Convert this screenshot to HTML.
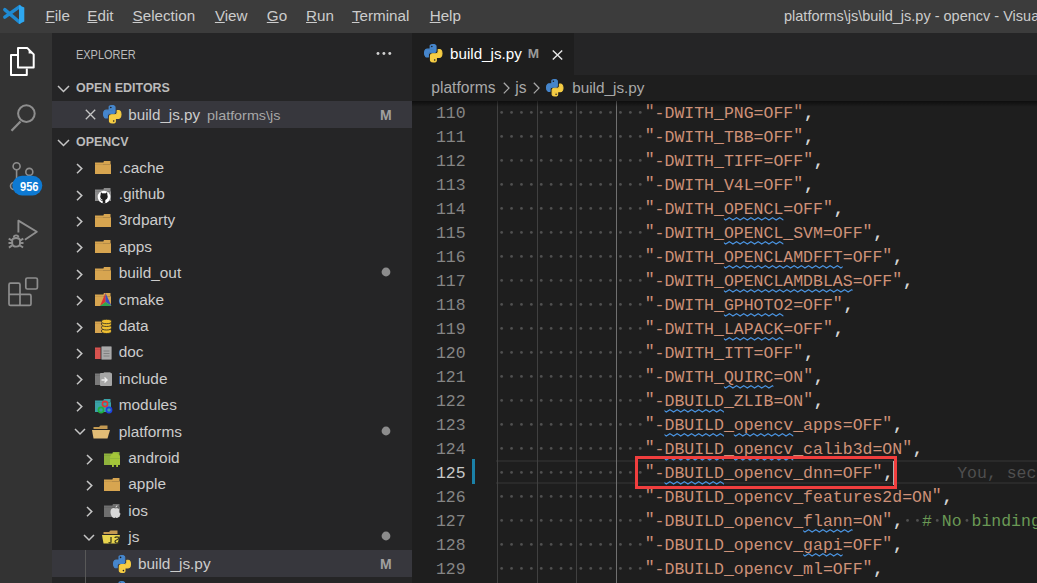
<!DOCTYPE html>
<html><head><meta charset="utf-8"><style>
html,body{margin:0;padding:0;width:1037px;height:583px;overflow:hidden;background:#1e1e1e;position:relative}
</style></head><body>
<div style="position:absolute;left:0px;top:0px;width:1037px;height:33px;background:#3c3c3c;"></div>
<div style="position:absolute;left:0px;top:33px;width:52px;height:550px;background:#333333;"></div>
<div style="position:absolute;left:52px;top:33px;width:360px;height:550px;background:#252526;"></div>
<div style="position:absolute;left:412px;top:33px;width:625px;height:42px;background:#252526;"></div>
<div style="position:absolute;left:412px;top:33px;width:162px;height:42px;background:#1e1e1e;"></div>
<div style="position:absolute;left:412px;top:75px;width:625px;height:508px;background:#1e1e1e;"></div>
<svg style="position:absolute;left:0px;top:0px;overflow:visible" width="30" height="30" viewBox="0 0 30 30">
<path d="M4.8 9.6 L19.6 22.2 M4.8 17.2 L19.6 6.6" stroke="#1f8ad2" stroke-width="3.4" stroke-linecap="round"/>
<path d="M19 5.2 L24.3 7.6 L24.3 21.6 L19 24 Z" fill="#2ea7f0"/></svg>
<div style="position:absolute;left:45.40px;top:15.53px;line-height:0;white-space:pre;font-family:'Liberation Sans', sans-serif;font-size:15.2px;color:#cccccc;font-weight:400;"><span style="text-decoration:underline;text-underline-offset:1px">F</span>ile</div>
<div style="position:absolute;left:87.30px;top:15.53px;line-height:0;white-space:pre;font-family:'Liberation Sans', sans-serif;font-size:15.2px;color:#cccccc;font-weight:400;"><span style="text-decoration:underline;text-underline-offset:1px">E</span>dit</div>
<div style="position:absolute;left:132.60px;top:15.53px;line-height:0;white-space:pre;font-family:'Liberation Sans', sans-serif;font-size:15.2px;color:#cccccc;font-weight:400;"><span style="text-decoration:underline;text-underline-offset:1px">S</span>election</div>
<div style="position:absolute;left:214.90px;top:15.53px;line-height:0;white-space:pre;font-family:'Liberation Sans', sans-serif;font-size:15.2px;color:#cccccc;font-weight:400;"><span style="text-decoration:underline;text-underline-offset:1px">V</span>iew</div>
<div style="position:absolute;left:266.80px;top:15.53px;line-height:0;white-space:pre;font-family:'Liberation Sans', sans-serif;font-size:15.2px;color:#cccccc;font-weight:400;"><span style="text-decoration:underline;text-underline-offset:1px">G</span>o</div>
<div style="position:absolute;left:306.00px;top:15.53px;line-height:0;white-space:pre;font-family:'Liberation Sans', sans-serif;font-size:15.2px;color:#cccccc;font-weight:400;"><span style="text-decoration:underline;text-underline-offset:1px">R</span>un</div>
<div style="position:absolute;left:351.90px;top:15.53px;line-height:0;white-space:pre;font-family:'Liberation Sans', sans-serif;font-size:15.2px;color:#cccccc;font-weight:400;"><span style="text-decoration:underline;text-underline-offset:1px">T</span>erminal</div>
<div style="position:absolute;left:429.70px;top:15.53px;line-height:0;white-space:pre;font-family:'Liberation Sans', sans-serif;font-size:15.2px;color:#cccccc;font-weight:400;"><span style="text-decoration:underline;text-underline-offset:1px">H</span>elp</div>
<div style="position:absolute;left:784.00px;top:15.78px;line-height:0;white-space:pre;font-family:'Liberation Sans', sans-serif;font-size:14.5px;color:#cccccc;font-weight:400;">platforms\js\build_js.py - opencv - Visual Studio Code</div>
<svg style="position:absolute;left:0px;top:0px;overflow:visible" width="52" height="320" viewBox="0 0 52 320">
<g fill="none" stroke="#ffffff" stroke-width="2" stroke-linejoin="round">
 <path d="M17 54.9 H11 V74.9 H26.8 V68.6"/>
 <path d="M18 48.1 H27.4 L33.7 54.4 V67.6 H18 Z"/>
</g>
<path d="M28.6 49.2 V53.4 H32.8 Z" fill="#ffffff"/>
<g fill="none" stroke="#8e8e8e" stroke-width="2">
 <circle cx="26.4" cy="113.6" r="8.3"/>
 <path d="M20.5 121.5 L11.5 130.8" stroke-width="2.3"/>
</g>
<g fill="none" stroke="#8e8e8e" stroke-width="1.6">
 <circle cx="16.6" cy="166.3" r="3.5"/>
 <circle cx="29.3" cy="171.9" r="3.5"/>
 <circle cx="14" cy="186" r="3.5"/>
 <path d="M16.6 169.8 V182.5"/>
 <path d="M29.3 175.4 C29.3 180 20 180 16.6 182.5"/>
</g>
<rect x="12.3" y="175.8" width="30" height="19.6" rx="9.8" fill="#0e7ad3"/>
<g fill="none" stroke="#8e8e8e" stroke-width="1.9" stroke-linejoin="round">
 <path d="M18.4 232.6 V220.6 L36.8 231.8 L24.9 239.8"/>
 <path d="M12.2 240.6 C12.2 237.2 20 237.2 20 240.6 V243.6 C20 247.6 12.2 247.6 12.2 243.6 Z"/>
 <path d="M13.8 237.6 C13.8 234.6 18.4 234.6 18.4 237.6"/>
 <path d="M8.7 238.6 L12.2 240.6 M8.5 243 H12.2 M8.9 247.6 L12.2 245.4 M23.3 238.6 L20 240.6 M23.5 243 H20 M23.1 247.6 L20 245.4"/>
</g>
<g fill="none" stroke="#8e8e8e" stroke-width="1.7">
 <path d="M20 294.4 V284.7 Q20 283.2 18.5 283.2 H10.5 Q9 283.2 9 284.7 V303.9 Q9 305.4 10.5 305.4 H29.5 Q31 305.4 31 303.9 V295.9 Q31 294.4 29.5 294.4 Z M9 294.4 H20 V305.4"/>
 <rect x="25.8" y="278" width="11.6" height="11" rx="1.6"/>
</g>
</svg>
<div style="position:absolute;left:19.50px;top:186.77px;line-height:0;white-space:pre;font-family:'Liberation Sans', sans-serif;font-size:12.2px;color:#ffffff;font-weight:700;transform:scaleX(0.91);transform-origin:0 0;">956</div>
<div style="position:absolute;left:75.70px;top:54.73px;line-height:0;white-space:pre;font-family:'Liberation Sans', sans-serif;font-size:12.6px;color:#bbbbbb;font-weight:400;transform:scaleX(0.87);transform-origin:0 0;">EXPLORER</div>
<svg style="position:absolute;left:374px;top:50px;overflow:visible" width="20" height="8" viewBox="0 0 20 8"><circle cx="4" cy="3.5" r="1.45" fill="#d0d0d0"/><circle cx="9.9" cy="3.5" r="1.45" fill="#d0d0d0"/><circle cx="15.8" cy="3.5" r="1.45" fill="#d0d0d0"/></svg>
<svg style="position:absolute;left:57px;top:85px;overflow:visible" width="14" height="8" viewBox="0 0 14 8"><path d="M1 1 L6.5 6.5 L12 1" fill="none" stroke="#c5c5c5" stroke-width="1.5"/></svg>
<div style="position:absolute;left:75.70px;top:88.06px;line-height:0;white-space:pre;font-family:'Liberation Sans', sans-serif;font-size:13.4px;color:#bbbbbb;font-weight:700;transform:scaleX(0.93);transform-origin:0 0;">OPEN EDITORS</div>
<div style="position:absolute;left:52px;top:101px;width:360px;height:27px;background:#37373d;"></div>
<svg style="position:absolute;left:85px;top:109px;overflow:visible" width="11" height="11" viewBox="0 0 11 11"><path d="M0.8 0.8 L10.2 10.2 M10.2 0.8 L0.8 10.2" stroke="#c5c5c5" stroke-width="1.3"/></svg>
<svg style="position:absolute;left:102.7px;top:104.6px;overflow:visible" width="18.5" height="18.5" viewBox="0 0 18 18">
<path d="M8.9,0.5 C5.8,0.5 6,1.9 6,1.9 V4.3 H9.1 V5 H3.1 C3.1,5 0.5,4.7 0.5,8.8 C0.5,12.9 2.8,12.7 2.8,12.7 H4.2 V10.8 C4.2,10.8 4.1,8.5 6.4,8.5 H9.5 C9.5,8.5 11.7,8.5 11.7,6.4 V2.7 C11.7,2.7 12,0.5 8.9,0.5 Z" fill="#4686cc" stroke="#4686cc" stroke-width="1.1" stroke-linejoin="round"/>
<circle cx="7.6" cy="2.4" r="0.8" fill="#1e1e1e"/>
<path d="M9.1,17.5 C12.2,17.5 12,16.1 12,16.1 V13.7 H8.9 V13 H14.9 C14.9,13 17.5,13.3 17.5,9.2 C17.5,5.1 15.2,5.3 15.2,5.3 H13.8 V7.2 C13.8,7.2 13.9,9.5 11.6,9.5 H8.5 C8.5,9.5 6.3,9.5 6.3,11.6 V15.3 C6.3,15.3 6,17.5 9.1,17.5 Z" fill="#f6cd44" stroke="#f6cd44" stroke-width="1.1" stroke-linejoin="round"/>
<circle cx="10.4" cy="15.6" r="0.8" fill="#1e1e1e"/></svg>
<div style="position:absolute;left:128.30px;top:114.53px;line-height:0;white-space:pre;font-family:'Liberation Sans', sans-serif;font-size:15.2px;color:#cccccc;font-weight:400;">build_js.py</div>
<div style="position:absolute;left:207.30px;top:115.52px;line-height:0;white-space:pre;font-family:'Liberation Sans', sans-serif;font-size:13.5px;color:#a8a8a8;font-weight:400;transform:scaleX(1.063);transform-origin:0 0;">platforms\js</div>
<div style="position:absolute;left:380.00px;top:114.95px;line-height:0;white-space:pre;font-family:'Liberation Sans', sans-serif;font-size:14px;color:#a0a0a0;font-weight:700;">M</div>
<svg style="position:absolute;left:57px;top:139px;overflow:visible" width="14" height="8" viewBox="0 0 14 8"><path d="M1 1 L6.5 6.5 L12 1" fill="none" stroke="#c5c5c5" stroke-width="1.5"/></svg>
<div style="position:absolute;left:75.70px;top:142.16px;line-height:0;white-space:pre;font-family:'Liberation Sans', sans-serif;font-size:13.4px;color:#bbbbbb;font-weight:700;transform:scaleX(0.93);transform-origin:0 0;">OPENCV</div>
<div style="position:absolute;left:52px;top:549.8000000000001px;width:360px;height:27px;background:#37373d;"></div>
<svg style="position:absolute;left:76.3px;top:163.2px;overflow:visible" width="8" height="12" viewBox="0 0 8 12"><path d="M1 1 L5.8 5.6 L1 10.2" fill="none" stroke="#c5c5c5" stroke-width="1.5"/></svg>
<svg style="position:absolute;left:94.5px;top:161.2px;overflow:visible" width="16" height="13" viewBox="0 0 16 13"><path d="M9 0 H15.5 V3 H7.5 Z" fill="#d7a550"/><rect x="0" y="3.2" width="16" height="9.8" fill="#d7a550"/><rect x="0" y="1.5" width="8" height="2" fill="#d7a550"/></svg>
<div style="position:absolute;left:118.70px;top:167.66px;line-height:0;white-space:pre;font-family:'Liberation Sans', sans-serif;font-size:15.4px;color:#cccccc;font-weight:400;">.cache</div>
<svg style="position:absolute;left:76.3px;top:189.6px;overflow:visible" width="8" height="12" viewBox="0 0 8 12"><path d="M1 1 L5.8 5.6 L1 10.2" fill="none" stroke="#c5c5c5" stroke-width="1.5"/></svg>
<svg style="position:absolute;left:94.5px;top:187.6px;overflow:visible" width="16" height="13" viewBox="0 0 16 13"><path d="M9 0 H15.5 V3 H7.5 Z" fill="#8b8b8b"/><rect x="0" y="3.2" width="16" height="9.8" fill="#8b8b8b"/><rect x="0" y="1.5" width="8" height="2" fill="#8b8b8b"/></svg>
<svg style="position:absolute;left:97.0px;top:190.0px;overflow:visible" width="14" height="14" viewBox="0 0 14 14"><circle cx="7" cy="7" r="6.3" fill="#ffffff"/><ellipse cx="7" cy="6.6" rx="3.7" ry="3.4" fill="#1e1e1e"/><path d="M3.6 5 L3.9 2.2 L5.8 3.6 Z M10.4 5 L10.1 2.2 L8.2 3.6 Z" fill="#1e1e1e"/><rect x="5.7" y="9" width="2.6" height="4.2" fill="#1e1e1e"/><path d="M5.8 10.6 C4.5 10.8 4 10 3.4 9.6" stroke="#1e1e1e" stroke-width="0.9" fill="none"/></svg>
<div style="position:absolute;left:118.70px;top:194.06px;line-height:0;white-space:pre;font-family:'Liberation Sans', sans-serif;font-size:15.4px;color:#cccccc;font-weight:400;">.github</div>
<svg style="position:absolute;left:76.3px;top:216.0px;overflow:visible" width="8" height="12" viewBox="0 0 8 12"><path d="M1 1 L5.8 5.6 L1 10.2" fill="none" stroke="#c5c5c5" stroke-width="1.5"/></svg>
<svg style="position:absolute;left:94.5px;top:214.0px;overflow:visible" width="16" height="13" viewBox="0 0 16 13"><path d="M9 0 H15.5 V3 H7.5 Z" fill="#d7a550"/><rect x="0" y="3.2" width="16" height="9.8" fill="#d7a550"/><rect x="0" y="1.5" width="8" height="2" fill="#d7a550"/></svg>
<div style="position:absolute;left:118.70px;top:220.46px;line-height:0;white-space:pre;font-family:'Liberation Sans', sans-serif;font-size:15.4px;color:#cccccc;font-weight:400;">3rdparty</div>
<svg style="position:absolute;left:76.3px;top:242.39999999999998px;overflow:visible" width="8" height="12" viewBox="0 0 8 12"><path d="M1 1 L5.8 5.6 L1 10.2" fill="none" stroke="#c5c5c5" stroke-width="1.5"/></svg>
<svg style="position:absolute;left:94.5px;top:240.39999999999998px;overflow:visible" width="16" height="13" viewBox="0 0 16 13"><path d="M9 0 H15.5 V3 H7.5 Z" fill="#d7a550"/><rect x="0" y="3.2" width="16" height="9.8" fill="#d7a550"/><rect x="0" y="1.5" width="8" height="2" fill="#d7a550"/></svg>
<div style="position:absolute;left:118.70px;top:246.86px;line-height:0;white-space:pre;font-family:'Liberation Sans', sans-serif;font-size:15.4px;color:#cccccc;font-weight:400;">apps</div>
<svg style="position:absolute;left:76.3px;top:268.79999999999995px;overflow:visible" width="8" height="12" viewBox="0 0 8 12"><path d="M1 1 L5.8 5.6 L1 10.2" fill="none" stroke="#c5c5c5" stroke-width="1.5"/></svg>
<svg style="position:absolute;left:94.5px;top:266.79999999999995px;overflow:visible" width="16" height="13" viewBox="0 0 16 13"><path d="M9 0 H15.5 V3 H7.5 Z" fill="#d7a550"/><rect x="0" y="3.2" width="16" height="9.8" fill="#d7a550"/><rect x="0" y="1.5" width="8" height="2" fill="#d7a550"/></svg>
<div style="position:absolute;left:118.70px;top:273.26px;line-height:0;white-space:pre;font-family:'Liberation Sans', sans-serif;font-size:15.4px;color:#cccccc;font-weight:400;">build_out</div>
<svg style="position:absolute;left:76.3px;top:295.2px;overflow:visible" width="8" height="12" viewBox="0 0 8 12"><path d="M1 1 L5.8 5.6 L1 10.2" fill="none" stroke="#c5c5c5" stroke-width="1.5"/></svg>
<svg style="position:absolute;left:94.5px;top:293.2px;overflow:visible" width="16" height="13" viewBox="0 0 16 13"><path d="M9 0 H15.5 V3 H7.5 Z" fill="#d7a550"/><rect x="0" y="3.2" width="16" height="9.8" fill="#d7a550"/><rect x="0" y="1.5" width="8" height="2" fill="#d7a550"/></svg>
<svg style="position:absolute;left:98.5px;top:293.2px;overflow:visible" width="13" height="14" viewBox="0 0 13 14"><path d="M6.5 0 L1 13 L6.5 9 Z" fill="#d33"/><path d="M6.5 0 L12.5 13 L6.5 9 Z" fill="#3b4cc0"/><path d="M1 13 L6.5 9 L12.5 13 Z" fill="#2ea44f"/></svg>
<div style="position:absolute;left:118.70px;top:299.66px;line-height:0;white-space:pre;font-family:'Liberation Sans', sans-serif;font-size:15.4px;color:#cccccc;font-weight:400;">cmake</div>
<svg style="position:absolute;left:76.3px;top:321.59999999999997px;overflow:visible" width="8" height="12" viewBox="0 0 8 12"><path d="M1 1 L5.8 5.6 L1 10.2" fill="none" stroke="#c5c5c5" stroke-width="1.5"/></svg>
<svg style="position:absolute;left:94.5px;top:319.59999999999997px;overflow:visible" width="16" height="13" viewBox="0 0 16 13"><path d="M9 0 H15.5 V3 H7.5 Z" fill="#d7a550"/><rect x="0" y="3.2" width="16" height="9.8" fill="#d7a550"/><rect x="0" y="1.5" width="8" height="2" fill="#d7a550"/></svg>
<svg style="position:absolute;left:100.5px;top:318.59999999999997px;overflow:visible" width="11" height="15" viewBox="0 0 11 15"><g fill="#f0c030" stroke="#252526" stroke-width="0.8"><ellipse cx="5.5" cy="12" rx="5" ry="2.5"/><ellipse cx="5.5" cy="8.5" rx="5" ry="2.5"/><ellipse cx="5.5" cy="5" rx="5" ry="2.5"/><ellipse cx="5.5" cy="2.5" rx="5" ry="2.2"/></g></svg>
<div style="position:absolute;left:118.70px;top:326.06px;line-height:0;white-space:pre;font-family:'Liberation Sans', sans-serif;font-size:15.4px;color:#cccccc;font-weight:400;">data</div>
<svg style="position:absolute;left:76.3px;top:348.0px;overflow:visible" width="8" height="12" viewBox="0 0 8 12"><path d="M1 1 L5.8 5.6 L1 10.2" fill="none" stroke="#c5c5c5" stroke-width="1.5"/></svg>
<svg style="position:absolute;left:94.5px;top:346.0px;overflow:visible" width="16" height="13" viewBox="0 0 16 13"><path d="M9 0 H15.5 V3 H7.5 Z" fill="#d9534f"/><rect x="0" y="3.2" width="16" height="9.8" fill="#d9534f"/><rect x="0" y="1.5" width="8" height="2" fill="#d9534f"/></svg>
<svg style="position:absolute;left:100.5px;top:346.0px;overflow:visible" width="11" height="14" viewBox="0 0 11 14"><rect x="0" y="0" width="11" height="14" rx="1" fill="#a9a9a9" stroke="#252526" stroke-width="0.8"/><path d="M2.5 5 H8.5 M2.5 7.5 H8.5 M2.5 10 H8.5" stroke="#777" stroke-width="0.8"/></svg>
<div style="position:absolute;left:118.70px;top:352.46px;line-height:0;white-space:pre;font-family:'Liberation Sans', sans-serif;font-size:15.4px;color:#cccccc;font-weight:400;">doc</div>
<svg style="position:absolute;left:76.3px;top:374.4px;overflow:visible" width="8" height="12" viewBox="0 0 8 12"><path d="M1 1 L5.8 5.6 L1 10.2" fill="none" stroke="#c5c5c5" stroke-width="1.5"/></svg>
<svg style="position:absolute;left:94.5px;top:372.4px;overflow:visible" width="16" height="13" viewBox="0 0 16 13"><path d="M9 0 H15.5 V3 H7.5 Z" fill="#7a7a7a"/><rect x="0" y="3.2" width="16" height="9.8" fill="#7a7a7a"/><rect x="0" y="1.5" width="8" height="2" fill="#7a7a7a"/></svg>
<svg style="position:absolute;left:99.5px;top:373.4px;overflow:visible" width="12" height="13" viewBox="0 0 12 13"><rect x="0" y="0" width="12" height="13" rx="1" fill="#a6a6a6"/><path d="M1.5 7 H6.5 M4.5 4.5 L7 7 L4.5 9.5" stroke="#eeeeee" stroke-width="1.4" fill="none"/></svg>
<div style="position:absolute;left:118.70px;top:378.86px;line-height:0;white-space:pre;font-family:'Liberation Sans', sans-serif;font-size:15.4px;color:#cccccc;font-weight:400;">include</div>
<svg style="position:absolute;left:76.3px;top:400.79999999999995px;overflow:visible" width="8" height="12" viewBox="0 0 8 12"><path d="M1 1 L5.8 5.6 L1 10.2" fill="none" stroke="#c5c5c5" stroke-width="1.5"/></svg>
<svg style="position:absolute;left:94.5px;top:398.79999999999995px;overflow:visible" width="16" height="13" viewBox="0 0 16 13"><path d="M9 0 H15.5 V3 H7.5 Z" fill="#3aa3a8"/><rect x="0" y="3.2" width="16" height="9.8" fill="#3aa3a8"/><rect x="0" y="1.5" width="8" height="2" fill="#3aa3a8"/></svg>
<svg style="position:absolute;left:95.5px;top:399.79999999999995px;overflow:visible" width="17" height="14" viewBox="0 0 17 14"><circle cx="9" cy="4" r="2.6" fill="none" stroke="#e03535" stroke-width="1.6"/><circle cx="5" cy="10" r="2.6" fill="none" stroke="#20b040" stroke-width="1.6"/><circle cx="13" cy="10" r="2.6" fill="none" stroke="#2040e0" stroke-width="1.6"/></svg>
<div style="position:absolute;left:118.70px;top:405.26px;line-height:0;white-space:pre;font-family:'Liberation Sans', sans-serif;font-size:15.4px;color:#cccccc;font-weight:400;">modules</div>
<svg style="position:absolute;left:73.5px;top:428.2px;overflow:visible" width="14" height="8" viewBox="0 0 14 8"><path d="M1 1 L6 6 L11 1" fill="none" stroke="#c5c5c5" stroke-width="1.5"/></svg>
<svg style="position:absolute;left:92.0px;top:424.7px;overflow:visible" width="18" height="14" viewBox="0 0 18 14"><path d="M1.5 2 H7 L8.5 0.5 H15.5 V4 H1.5 Z" fill="#c49a52"/><path d="M0 5 H18 L15.5 13.5 H1.5 Z" fill="#e3bd76"/></svg>
<div style="position:absolute;left:118.70px;top:431.66px;line-height:0;white-space:pre;font-family:'Liberation Sans', sans-serif;font-size:15.4px;color:#cccccc;font-weight:400;">platforms</div>
<svg style="position:absolute;left:85.89999999999999px;top:453.59999999999997px;overflow:visible" width="8" height="12" viewBox="0 0 8 12"><path d="M1 1 L5.8 5.6 L1 10.2" fill="none" stroke="#c5c5c5" stroke-width="1.5"/></svg>
<svg style="position:absolute;left:104.1px;top:451.59999999999997px;overflow:visible" width="16" height="13" viewBox="0 0 16 13"><path d="M9 0 H15.5 V3 H7.5 Z" fill="#8fb33c"/><rect x="0" y="3.2" width="16" height="9.8" fill="#8fb33c"/><rect x="0" y="1.5" width="8" height="2" fill="#8fb33c"/></svg>
<svg style="position:absolute;left:109.1px;top:451.59999999999997px;overflow:visible" width="12" height="15" viewBox="0 0 12 15"><path d="M1 6 A5 5 0 0 1 11 6 Z" fill="#a4c639"/><rect x="1" y="6.8" width="10" height="6" fill="#a4c639"/><rect x="3" y="12" width="1.8" height="3" fill="#a4c639"/><rect x="7.2" y="12" width="1.8" height="3" fill="#a4c639"/></svg>
<div style="position:absolute;left:128.30px;top:458.06px;line-height:0;white-space:pre;font-family:'Liberation Sans', sans-serif;font-size:15.4px;color:#cccccc;font-weight:400;">android</div>
<svg style="position:absolute;left:85.89999999999999px;top:479.99999999999994px;overflow:visible" width="8" height="12" viewBox="0 0 8 12"><path d="M1 1 L5.8 5.6 L1 10.2" fill="none" stroke="#c5c5c5" stroke-width="1.5"/></svg>
<svg style="position:absolute;left:104.1px;top:477.99999999999994px;overflow:visible" width="16" height="13" viewBox="0 0 16 13"><path d="M9 0 H15.5 V3 H7.5 Z" fill="#d7a550"/><rect x="0" y="3.2" width="16" height="9.8" fill="#d7a550"/><rect x="0" y="1.5" width="8" height="2" fill="#d7a550"/></svg>
<div style="position:absolute;left:128.30px;top:484.46px;line-height:0;white-space:pre;font-family:'Liberation Sans', sans-serif;font-size:15.4px;color:#cccccc;font-weight:400;">apple</div>
<svg style="position:absolute;left:85.89999999999999px;top:506.4px;overflow:visible" width="8" height="12" viewBox="0 0 8 12"><path d="M1 1 L5.8 5.6 L1 10.2" fill="none" stroke="#c5c5c5" stroke-width="1.5"/></svg>
<svg style="position:absolute;left:104.1px;top:504.4px;overflow:visible" width="16" height="13" viewBox="0 0 16 13"><path d="M9 0 H15.5 V3 H7.5 Z" fill="#6f6f6f"/><rect x="0" y="3.2" width="16" height="9.8" fill="#6f6f6f"/><rect x="0" y="1.5" width="8" height="2" fill="#6f6f6f"/></svg>
<svg style="position:absolute;left:110.1px;top:505.4px;overflow:visible" width="11" height="13" viewBox="0 0 11 13"><path d="M5.5 3.5 C3 2 0.5 3.5 0.5 7 C0.5 10 2.5 13 4 13 C4.8 13 5 12.5 5.5 12.5 C6 12.5 6.2 13 7 13 C8.5 13 10.5 10 10.5 8.5 C9 8 8.5 6.5 9.3 4.5 C8 3 6.5 3 5.5 3.5 Z M5.5 2.8 C5.5 1.5 6.5 0.5 7.5 0.3 C7.5 1.5 6.8 2.5 5.5 2.8 Z" fill="#d8d8d8"/></svg>
<div style="position:absolute;left:128.30px;top:510.86px;line-height:0;white-space:pre;font-family:'Liberation Sans', sans-serif;font-size:15.4px;color:#cccccc;font-weight:400;">ios</div>
<svg style="position:absolute;left:83.1px;top:533.8px;overflow:visible" width="14" height="8" viewBox="0 0 14 8"><path d="M1 1 L6 6 L11 1" fill="none" stroke="#c5c5c5" stroke-width="1.5"/></svg>
<svg style="position:absolute;left:101.6px;top:530.3px;overflow:visible" width="18" height="14" viewBox="0 0 18 14"><path d="M1.5 2 H7 L8.5 0.5 H15.5 V4 H1.5 Z" fill="#c49a52"/><path d="M0 5 H18 L15.5 13.5 H1.5 Z" fill="#e8d44d"/></svg>
<svg style="position:absolute;left:109.1px;top:534.8px;overflow:visible" width="13" height="10" viewBox="0 0 13 10"><path d="M2 2 V7 C2 8.5 0 8.5 0 7 M6 3 C6 1.5 10 1.5 10 3 C10 5 6 4.5 6 6.5 C6 8.5 10 8.5 10 7" stroke="#3a3a20" stroke-width="1.3" fill="none"/></svg>
<div style="position:absolute;left:128.30px;top:537.26px;line-height:0;white-space:pre;font-family:'Liberation Sans', sans-serif;font-size:15.4px;color:#cccccc;font-weight:400;">js</div>
<svg style="position:absolute;left:112.8px;top:554.8000000000001px;overflow:visible" width="18" height="18" viewBox="0 0 18 18">
<path d="M8.9,0.5 C5.8,0.5 6,1.9 6,1.9 V4.3 H9.1 V5 H3.1 C3.1,5 0.5,4.7 0.5,8.8 C0.5,12.9 2.8,12.7 2.8,12.7 H4.2 V10.8 C4.2,10.8 4.1,8.5 6.4,8.5 H9.5 C9.5,8.5 11.7,8.5 11.7,6.4 V2.7 C11.7,2.7 12,0.5 8.9,0.5 Z" fill="#4686cc" stroke="#4686cc" stroke-width="1.1" stroke-linejoin="round"/>
<circle cx="7.6" cy="2.4" r="0.8" fill="#1e1e1e"/>
<path d="M9.1,17.5 C12.2,17.5 12,16.1 12,16.1 V13.7 H8.9 V13 H14.9 C14.9,13 17.5,13.3 17.5,9.2 C17.5,5.1 15.2,5.3 15.2,5.3 H13.8 V7.2 C13.8,7.2 13.9,9.5 11.6,9.5 H8.5 C8.5,9.5 6.3,9.5 6.3,11.6 V15.3 C6.3,15.3 6,17.5 9.1,17.5 Z" fill="#f6cd44" stroke="#f6cd44" stroke-width="1.1" stroke-linejoin="round"/>
<circle cx="10.4" cy="15.6" r="0.8" fill="#1e1e1e"/></svg>
<div style="position:absolute;left:137.90px;top:563.66px;line-height:0;white-space:pre;font-family:'Liberation Sans', sans-serif;font-size:15.4px;color:#cccccc;font-weight:400;">build_js.py</div>
<svg style="position:absolute;left:112.8px;top:581.1999999999999px;overflow:visible" width="18" height="18" viewBox="0 0 18 18">
<path d="M8.9,0.5 C5.8,0.5 6,1.9 6,1.9 V4.3 H9.1 V5 H3.1 C3.1,5 0.5,4.7 0.5,8.8 C0.5,12.9 2.8,12.7 2.8,12.7 H4.2 V10.8 C4.2,10.8 4.1,8.5 6.4,8.5 H9.5 C9.5,8.5 11.7,8.5 11.7,6.4 V2.7 C11.7,2.7 12,0.5 8.9,0.5 Z" fill="#4686cc" stroke="#4686cc" stroke-width="1.1" stroke-linejoin="round"/>
<circle cx="7.6" cy="2.4" r="0.8" fill="#1e1e1e"/>
<path d="M9.1,17.5 C12.2,17.5 12,16.1 12,16.1 V13.7 H8.9 V13 H14.9 C14.9,13 17.5,13.3 17.5,9.2 C17.5,5.1 15.2,5.3 15.2,5.3 H13.8 V7.2 C13.8,7.2 13.9,9.5 11.6,9.5 H8.5 C8.5,9.5 6.3,9.5 6.3,11.6 V15.3 C6.3,15.3 6,17.5 9.1,17.5 Z" fill="#f6cd44" stroke="#f6cd44" stroke-width="1.1" stroke-linejoin="round"/>
<circle cx="10.4" cy="15.6" r="0.8" fill="#1e1e1e"/></svg>
<svg style="position:absolute;left:382.1px;top:268.19999999999993px;overflow:visible" width="8" height="8" viewBox="0 0 8 8"><circle cx="4" cy="4" r="4.4" fill="#8c8c8c"/></svg>
<svg style="position:absolute;left:382.1px;top:426.59999999999997px;overflow:visible" width="8" height="8" viewBox="0 0 8 8"><circle cx="4" cy="4" r="4.4" fill="#8c8c8c"/></svg>
<svg style="position:absolute;left:382.1px;top:532.1999999999999px;overflow:visible" width="8" height="8" viewBox="0 0 8 8"><circle cx="4" cy="4" r="4.4" fill="#8c8c8c"/></svg>
<div style="position:absolute;left:380.00px;top:564.15px;line-height:0;white-space:pre;font-family:'Liberation Sans', sans-serif;font-size:14px;color:#a0a0a0;font-weight:700;">M</div>
<div style="position:absolute;left:85px;top:550px;width:1px;height:40px;background:#585858;"></div>
<svg style="position:absolute;left:424.2px;top:44.2px;overflow:visible" width="18.5" height="18.5" viewBox="0 0 18 18">
<path d="M8.9,0.5 C5.8,0.5 6,1.9 6,1.9 V4.3 H9.1 V5 H3.1 C3.1,5 0.5,4.7 0.5,8.8 C0.5,12.9 2.8,12.7 2.8,12.7 H4.2 V10.8 C4.2,10.8 4.1,8.5 6.4,8.5 H9.5 C9.5,8.5 11.7,8.5 11.7,6.4 V2.7 C11.7,2.7 12,0.5 8.9,0.5 Z" fill="#4686cc" stroke="#4686cc" stroke-width="1.1" stroke-linejoin="round"/>
<circle cx="7.6" cy="2.4" r="0.8" fill="#1e1e1e"/>
<path d="M9.1,17.5 C12.2,17.5 12,16.1 12,16.1 V13.7 H8.9 V13 H14.9 C14.9,13 17.5,13.3 17.5,9.2 C17.5,5.1 15.2,5.3 15.2,5.3 H13.8 V7.2 C13.8,7.2 13.9,9.5 11.6,9.5 H8.5 C8.5,9.5 6.3,9.5 6.3,11.6 V15.3 C6.3,15.3 6,17.5 9.1,17.5 Z" fill="#f6cd44" stroke="#f6cd44" stroke-width="1.1" stroke-linejoin="round"/>
<circle cx="10.4" cy="15.6" r="0.8" fill="#1e1e1e"/></svg>
<div style="position:absolute;left:450.00px;top:54.03px;line-height:0;white-space:pre;font-family:'Liberation Sans', sans-serif;font-size:15.2px;color:#ffffff;font-weight:400;">build_js.py</div>
<div style="position:absolute;left:527.80px;top:54.09px;line-height:0;white-space:pre;font-family:'Liberation Sans', sans-serif;font-size:13.6px;color:#9a9a9a;font-weight:700;">M</div>
<svg style="position:absolute;left:552px;top:50px;overflow:visible" width="11" height="10" viewBox="0 0 11 10"><path d="M0.8 0.5 L10.2 9.5 M10.2 0.5 L0.8 9.5" stroke="#e8e8e8" stroke-width="1.4"/></svg>
<div style="position:absolute;left:431.30px;top:87.89px;line-height:0;white-space:pre;font-family:'Liberation Sans', sans-serif;font-size:15.6px;color:#a9a9a9;font-weight:400;">platforms</div>
<svg style="position:absolute;left:503.3px;top:82.3px;overflow:visible" width="7" height="12" viewBox="0 0 7 12"><path d="M0.8 0.8 L6 6.1 L0.8 11.4" stroke="#a9a9a9" stroke-width="1.3" fill="none"/></svg>
<div style="position:absolute;left:515.30px;top:87.89px;line-height:0;white-space:pre;font-family:'Liberation Sans', sans-serif;font-size:15.6px;color:#a9a9a9;font-weight:400;">js</div>
<svg style="position:absolute;left:532.8px;top:82.3px;overflow:visible" width="7" height="12" viewBox="0 0 7 12"><path d="M0.8 0.8 L6 6.1 L0.8 11.4" stroke="#a9a9a9" stroke-width="1.3" fill="none"/></svg>
<svg style="position:absolute;left:545.5px;top:78.8px;overflow:visible" width="17.5" height="17.5" viewBox="0 0 18 18">
<path d="M8.9,0.5 C5.8,0.5 6,1.9 6,1.9 V4.3 H9.1 V5 H3.1 C3.1,5 0.5,4.7 0.5,8.8 C0.5,12.9 2.8,12.7 2.8,12.7 H4.2 V10.8 C4.2,10.8 4.1,8.5 6.4,8.5 H9.5 C9.5,8.5 11.7,8.5 11.7,6.4 V2.7 C11.7,2.7 12,0.5 8.9,0.5 Z" fill="#4686cc" stroke="#4686cc" stroke-width="1.1" stroke-linejoin="round"/>
<circle cx="7.6" cy="2.4" r="0.8" fill="#1e1e1e"/>
<path d="M9.1,17.5 C12.2,17.5 12,16.1 12,16.1 V13.7 H8.9 V13 H14.9 C14.9,13 17.5,13.3 17.5,9.2 C17.5,5.1 15.2,5.3 15.2,5.3 H13.8 V7.2 C13.8,7.2 13.9,9.5 11.6,9.5 H8.5 C8.5,9.5 6.3,9.5 6.3,11.6 V15.3 C6.3,15.3 6,17.5 9.1,17.5 Z" fill="#f6cd44" stroke="#f6cd44" stroke-width="1.1" stroke-linejoin="round"/>
<circle cx="10.4" cy="15.6" r="0.8" fill="#1e1e1e"/></svg>
<div style="position:absolute;left:572.20px;top:88.00px;line-height:0;white-space:pre;font-family:'Liberation Sans', sans-serif;font-size:15.3px;color:#a9a9a9;font-weight:400;">build_js.py</div>
<div style="position:absolute;left:496.2px;top:459.59999999999997px;width:541px;height:2px;background:#2a2a2a;"></div>
<div style="position:absolute;left:496.2px;top:481.79999999999995px;width:541px;height:2px;background:#2a2a2a;"></div>
<div style="position:absolute;left:497px;top:101px;width:1px;height:482px;background:#404040;"></div>
<div style="position:absolute;left:537px;top:101px;width:1px;height:482px;background:#404040;"></div>
<div style="position:absolute;left:576px;top:101px;width:1px;height:482px;background:#404040;"></div>
<div style="position:absolute;left:616px;top:101px;width:1px;height:482px;background:#707070;"></div>
<svg style="position:absolute;left:0px;top:0px;overflow:visible" width="1037" height="583" viewBox="0 0 1037 583"><circle cx="501.65" cy="112.40" r="1.4" fill="#505050"/><circle cx="511.55" cy="112.40" r="1.4" fill="#505050"/><circle cx="521.45" cy="112.40" r="1.4" fill="#505050"/><circle cx="531.35" cy="112.40" r="1.4" fill="#505050"/><circle cx="541.25" cy="112.40" r="1.4" fill="#505050"/><circle cx="551.15" cy="112.40" r="1.4" fill="#505050"/><circle cx="561.05" cy="112.40" r="1.4" fill="#505050"/><circle cx="570.95" cy="112.40" r="1.4" fill="#505050"/><circle cx="580.85" cy="112.40" r="1.4" fill="#505050"/><circle cx="590.75" cy="112.40" r="1.4" fill="#505050"/><circle cx="600.65" cy="112.40" r="1.4" fill="#505050"/><circle cx="610.55" cy="112.40" r="1.4" fill="#505050"/><circle cx="620.45" cy="112.40" r="1.4" fill="#505050"/><circle cx="630.35" cy="112.40" r="1.4" fill="#505050"/><circle cx="640.25" cy="112.40" r="1.4" fill="#505050"/><circle cx="501.65" cy="136.40" r="1.4" fill="#505050"/><circle cx="511.55" cy="136.40" r="1.4" fill="#505050"/><circle cx="521.45" cy="136.40" r="1.4" fill="#505050"/><circle cx="531.35" cy="136.40" r="1.4" fill="#505050"/><circle cx="541.25" cy="136.40" r="1.4" fill="#505050"/><circle cx="551.15" cy="136.40" r="1.4" fill="#505050"/><circle cx="561.05" cy="136.40" r="1.4" fill="#505050"/><circle cx="570.95" cy="136.40" r="1.4" fill="#505050"/><circle cx="580.85" cy="136.40" r="1.4" fill="#505050"/><circle cx="590.75" cy="136.40" r="1.4" fill="#505050"/><circle cx="600.65" cy="136.40" r="1.4" fill="#505050"/><circle cx="610.55" cy="136.40" r="1.4" fill="#505050"/><circle cx="620.45" cy="136.40" r="1.4" fill="#505050"/><circle cx="630.35" cy="136.40" r="1.4" fill="#505050"/><circle cx="640.25" cy="136.40" r="1.4" fill="#505050"/><circle cx="501.65" cy="160.40" r="1.4" fill="#505050"/><circle cx="511.55" cy="160.40" r="1.4" fill="#505050"/><circle cx="521.45" cy="160.40" r="1.4" fill="#505050"/><circle cx="531.35" cy="160.40" r="1.4" fill="#505050"/><circle cx="541.25" cy="160.40" r="1.4" fill="#505050"/><circle cx="551.15" cy="160.40" r="1.4" fill="#505050"/><circle cx="561.05" cy="160.40" r="1.4" fill="#505050"/><circle cx="570.95" cy="160.40" r="1.4" fill="#505050"/><circle cx="580.85" cy="160.40" r="1.4" fill="#505050"/><circle cx="590.75" cy="160.40" r="1.4" fill="#505050"/><circle cx="600.65" cy="160.40" r="1.4" fill="#505050"/><circle cx="610.55" cy="160.40" r="1.4" fill="#505050"/><circle cx="620.45" cy="160.40" r="1.4" fill="#505050"/><circle cx="630.35" cy="160.40" r="1.4" fill="#505050"/><circle cx="640.25" cy="160.40" r="1.4" fill="#505050"/><circle cx="501.65" cy="184.40" r="1.4" fill="#505050"/><circle cx="511.55" cy="184.40" r="1.4" fill="#505050"/><circle cx="521.45" cy="184.40" r="1.4" fill="#505050"/><circle cx="531.35" cy="184.40" r="1.4" fill="#505050"/><circle cx="541.25" cy="184.40" r="1.4" fill="#505050"/><circle cx="551.15" cy="184.40" r="1.4" fill="#505050"/><circle cx="561.05" cy="184.40" r="1.4" fill="#505050"/><circle cx="570.95" cy="184.40" r="1.4" fill="#505050"/><circle cx="580.85" cy="184.40" r="1.4" fill="#505050"/><circle cx="590.75" cy="184.40" r="1.4" fill="#505050"/><circle cx="600.65" cy="184.40" r="1.4" fill="#505050"/><circle cx="610.55" cy="184.40" r="1.4" fill="#505050"/><circle cx="620.45" cy="184.40" r="1.4" fill="#505050"/><circle cx="630.35" cy="184.40" r="1.4" fill="#505050"/><circle cx="640.25" cy="184.40" r="1.4" fill="#505050"/><circle cx="501.65" cy="208.40" r="1.4" fill="#505050"/><circle cx="511.55" cy="208.40" r="1.4" fill="#505050"/><circle cx="521.45" cy="208.40" r="1.4" fill="#505050"/><circle cx="531.35" cy="208.40" r="1.4" fill="#505050"/><circle cx="541.25" cy="208.40" r="1.4" fill="#505050"/><circle cx="551.15" cy="208.40" r="1.4" fill="#505050"/><circle cx="561.05" cy="208.40" r="1.4" fill="#505050"/><circle cx="570.95" cy="208.40" r="1.4" fill="#505050"/><circle cx="580.85" cy="208.40" r="1.4" fill="#505050"/><circle cx="590.75" cy="208.40" r="1.4" fill="#505050"/><circle cx="600.65" cy="208.40" r="1.4" fill="#505050"/><circle cx="610.55" cy="208.40" r="1.4" fill="#505050"/><circle cx="620.45" cy="208.40" r="1.4" fill="#505050"/><circle cx="630.35" cy="208.40" r="1.4" fill="#505050"/><circle cx="640.25" cy="208.40" r="1.4" fill="#505050"/><circle cx="501.65" cy="232.40" r="1.4" fill="#505050"/><circle cx="511.55" cy="232.40" r="1.4" fill="#505050"/><circle cx="521.45" cy="232.40" r="1.4" fill="#505050"/><circle cx="531.35" cy="232.40" r="1.4" fill="#505050"/><circle cx="541.25" cy="232.40" r="1.4" fill="#505050"/><circle cx="551.15" cy="232.40" r="1.4" fill="#505050"/><circle cx="561.05" cy="232.40" r="1.4" fill="#505050"/><circle cx="570.95" cy="232.40" r="1.4" fill="#505050"/><circle cx="580.85" cy="232.40" r="1.4" fill="#505050"/><circle cx="590.75" cy="232.40" r="1.4" fill="#505050"/><circle cx="600.65" cy="232.40" r="1.4" fill="#505050"/><circle cx="610.55" cy="232.40" r="1.4" fill="#505050"/><circle cx="620.45" cy="232.40" r="1.4" fill="#505050"/><circle cx="630.35" cy="232.40" r="1.4" fill="#505050"/><circle cx="640.25" cy="232.40" r="1.4" fill="#505050"/><circle cx="501.65" cy="256.40" r="1.4" fill="#505050"/><circle cx="511.55" cy="256.40" r="1.4" fill="#505050"/><circle cx="521.45" cy="256.40" r="1.4" fill="#505050"/><circle cx="531.35" cy="256.40" r="1.4" fill="#505050"/><circle cx="541.25" cy="256.40" r="1.4" fill="#505050"/><circle cx="551.15" cy="256.40" r="1.4" fill="#505050"/><circle cx="561.05" cy="256.40" r="1.4" fill="#505050"/><circle cx="570.95" cy="256.40" r="1.4" fill="#505050"/><circle cx="580.85" cy="256.40" r="1.4" fill="#505050"/><circle cx="590.75" cy="256.40" r="1.4" fill="#505050"/><circle cx="600.65" cy="256.40" r="1.4" fill="#505050"/><circle cx="610.55" cy="256.40" r="1.4" fill="#505050"/><circle cx="620.45" cy="256.40" r="1.4" fill="#505050"/><circle cx="630.35" cy="256.40" r="1.4" fill="#505050"/><circle cx="640.25" cy="256.40" r="1.4" fill="#505050"/><circle cx="501.65" cy="280.40" r="1.4" fill="#505050"/><circle cx="511.55" cy="280.40" r="1.4" fill="#505050"/><circle cx="521.45" cy="280.40" r="1.4" fill="#505050"/><circle cx="531.35" cy="280.40" r="1.4" fill="#505050"/><circle cx="541.25" cy="280.40" r="1.4" fill="#505050"/><circle cx="551.15" cy="280.40" r="1.4" fill="#505050"/><circle cx="561.05" cy="280.40" r="1.4" fill="#505050"/><circle cx="570.95" cy="280.40" r="1.4" fill="#505050"/><circle cx="580.85" cy="280.40" r="1.4" fill="#505050"/><circle cx="590.75" cy="280.40" r="1.4" fill="#505050"/><circle cx="600.65" cy="280.40" r="1.4" fill="#505050"/><circle cx="610.55" cy="280.40" r="1.4" fill="#505050"/><circle cx="620.45" cy="280.40" r="1.4" fill="#505050"/><circle cx="630.35" cy="280.40" r="1.4" fill="#505050"/><circle cx="640.25" cy="280.40" r="1.4" fill="#505050"/><circle cx="501.65" cy="304.40" r="1.4" fill="#505050"/><circle cx="511.55" cy="304.40" r="1.4" fill="#505050"/><circle cx="521.45" cy="304.40" r="1.4" fill="#505050"/><circle cx="531.35" cy="304.40" r="1.4" fill="#505050"/><circle cx="541.25" cy="304.40" r="1.4" fill="#505050"/><circle cx="551.15" cy="304.40" r="1.4" fill="#505050"/><circle cx="561.05" cy="304.40" r="1.4" fill="#505050"/><circle cx="570.95" cy="304.40" r="1.4" fill="#505050"/><circle cx="580.85" cy="304.40" r="1.4" fill="#505050"/><circle cx="590.75" cy="304.40" r="1.4" fill="#505050"/><circle cx="600.65" cy="304.40" r="1.4" fill="#505050"/><circle cx="610.55" cy="304.40" r="1.4" fill="#505050"/><circle cx="620.45" cy="304.40" r="1.4" fill="#505050"/><circle cx="630.35" cy="304.40" r="1.4" fill="#505050"/><circle cx="640.25" cy="304.40" r="1.4" fill="#505050"/><circle cx="501.65" cy="328.40" r="1.4" fill="#505050"/><circle cx="511.55" cy="328.40" r="1.4" fill="#505050"/><circle cx="521.45" cy="328.40" r="1.4" fill="#505050"/><circle cx="531.35" cy="328.40" r="1.4" fill="#505050"/><circle cx="541.25" cy="328.40" r="1.4" fill="#505050"/><circle cx="551.15" cy="328.40" r="1.4" fill="#505050"/><circle cx="561.05" cy="328.40" r="1.4" fill="#505050"/><circle cx="570.95" cy="328.40" r="1.4" fill="#505050"/><circle cx="580.85" cy="328.40" r="1.4" fill="#505050"/><circle cx="590.75" cy="328.40" r="1.4" fill="#505050"/><circle cx="600.65" cy="328.40" r="1.4" fill="#505050"/><circle cx="610.55" cy="328.40" r="1.4" fill="#505050"/><circle cx="620.45" cy="328.40" r="1.4" fill="#505050"/><circle cx="630.35" cy="328.40" r="1.4" fill="#505050"/><circle cx="640.25" cy="328.40" r="1.4" fill="#505050"/><circle cx="501.65" cy="352.40" r="1.4" fill="#505050"/><circle cx="511.55" cy="352.40" r="1.4" fill="#505050"/><circle cx="521.45" cy="352.40" r="1.4" fill="#505050"/><circle cx="531.35" cy="352.40" r="1.4" fill="#505050"/><circle cx="541.25" cy="352.40" r="1.4" fill="#505050"/><circle cx="551.15" cy="352.40" r="1.4" fill="#505050"/><circle cx="561.05" cy="352.40" r="1.4" fill="#505050"/><circle cx="570.95" cy="352.40" r="1.4" fill="#505050"/><circle cx="580.85" cy="352.40" r="1.4" fill="#505050"/><circle cx="590.75" cy="352.40" r="1.4" fill="#505050"/><circle cx="600.65" cy="352.40" r="1.4" fill="#505050"/><circle cx="610.55" cy="352.40" r="1.4" fill="#505050"/><circle cx="620.45" cy="352.40" r="1.4" fill="#505050"/><circle cx="630.35" cy="352.40" r="1.4" fill="#505050"/><circle cx="640.25" cy="352.40" r="1.4" fill="#505050"/><circle cx="501.65" cy="376.40" r="1.4" fill="#505050"/><circle cx="511.55" cy="376.40" r="1.4" fill="#505050"/><circle cx="521.45" cy="376.40" r="1.4" fill="#505050"/><circle cx="531.35" cy="376.40" r="1.4" fill="#505050"/><circle cx="541.25" cy="376.40" r="1.4" fill="#505050"/><circle cx="551.15" cy="376.40" r="1.4" fill="#505050"/><circle cx="561.05" cy="376.40" r="1.4" fill="#505050"/><circle cx="570.95" cy="376.40" r="1.4" fill="#505050"/><circle cx="580.85" cy="376.40" r="1.4" fill="#505050"/><circle cx="590.75" cy="376.40" r="1.4" fill="#505050"/><circle cx="600.65" cy="376.40" r="1.4" fill="#505050"/><circle cx="610.55" cy="376.40" r="1.4" fill="#505050"/><circle cx="620.45" cy="376.40" r="1.4" fill="#505050"/><circle cx="630.35" cy="376.40" r="1.4" fill="#505050"/><circle cx="640.25" cy="376.40" r="1.4" fill="#505050"/><circle cx="501.65" cy="400.40" r="1.4" fill="#505050"/><circle cx="511.55" cy="400.40" r="1.4" fill="#505050"/><circle cx="521.45" cy="400.40" r="1.4" fill="#505050"/><circle cx="531.35" cy="400.40" r="1.4" fill="#505050"/><circle cx="541.25" cy="400.40" r="1.4" fill="#505050"/><circle cx="551.15" cy="400.40" r="1.4" fill="#505050"/><circle cx="561.05" cy="400.40" r="1.4" fill="#505050"/><circle cx="570.95" cy="400.40" r="1.4" fill="#505050"/><circle cx="580.85" cy="400.40" r="1.4" fill="#505050"/><circle cx="590.75" cy="400.40" r="1.4" fill="#505050"/><circle cx="600.65" cy="400.40" r="1.4" fill="#505050"/><circle cx="610.55" cy="400.40" r="1.4" fill="#505050"/><circle cx="620.45" cy="400.40" r="1.4" fill="#505050"/><circle cx="630.35" cy="400.40" r="1.4" fill="#505050"/><circle cx="640.25" cy="400.40" r="1.4" fill="#505050"/><circle cx="501.65" cy="424.40" r="1.4" fill="#505050"/><circle cx="511.55" cy="424.40" r="1.4" fill="#505050"/><circle cx="521.45" cy="424.40" r="1.4" fill="#505050"/><circle cx="531.35" cy="424.40" r="1.4" fill="#505050"/><circle cx="541.25" cy="424.40" r="1.4" fill="#505050"/><circle cx="551.15" cy="424.40" r="1.4" fill="#505050"/><circle cx="561.05" cy="424.40" r="1.4" fill="#505050"/><circle cx="570.95" cy="424.40" r="1.4" fill="#505050"/><circle cx="580.85" cy="424.40" r="1.4" fill="#505050"/><circle cx="590.75" cy="424.40" r="1.4" fill="#505050"/><circle cx="600.65" cy="424.40" r="1.4" fill="#505050"/><circle cx="610.55" cy="424.40" r="1.4" fill="#505050"/><circle cx="620.45" cy="424.40" r="1.4" fill="#505050"/><circle cx="630.35" cy="424.40" r="1.4" fill="#505050"/><circle cx="640.25" cy="424.40" r="1.4" fill="#505050"/><circle cx="501.65" cy="448.40" r="1.4" fill="#505050"/><circle cx="511.55" cy="448.40" r="1.4" fill="#505050"/><circle cx="521.45" cy="448.40" r="1.4" fill="#505050"/><circle cx="531.35" cy="448.40" r="1.4" fill="#505050"/><circle cx="541.25" cy="448.40" r="1.4" fill="#505050"/><circle cx="551.15" cy="448.40" r="1.4" fill="#505050"/><circle cx="561.05" cy="448.40" r="1.4" fill="#505050"/><circle cx="570.95" cy="448.40" r="1.4" fill="#505050"/><circle cx="580.85" cy="448.40" r="1.4" fill="#505050"/><circle cx="590.75" cy="448.40" r="1.4" fill="#505050"/><circle cx="600.65" cy="448.40" r="1.4" fill="#505050"/><circle cx="610.55" cy="448.40" r="1.4" fill="#505050"/><circle cx="620.45" cy="448.40" r="1.4" fill="#505050"/><circle cx="630.35" cy="448.40" r="1.4" fill="#505050"/><circle cx="640.25" cy="448.40" r="1.4" fill="#505050"/><circle cx="501.65" cy="472.40" r="1.4" fill="#505050"/><circle cx="511.55" cy="472.40" r="1.4" fill="#505050"/><circle cx="521.45" cy="472.40" r="1.4" fill="#505050"/><circle cx="531.35" cy="472.40" r="1.4" fill="#505050"/><circle cx="541.25" cy="472.40" r="1.4" fill="#505050"/><circle cx="551.15" cy="472.40" r="1.4" fill="#505050"/><circle cx="561.05" cy="472.40" r="1.4" fill="#505050"/><circle cx="570.95" cy="472.40" r="1.4" fill="#505050"/><circle cx="580.85" cy="472.40" r="1.4" fill="#505050"/><circle cx="590.75" cy="472.40" r="1.4" fill="#505050"/><circle cx="600.65" cy="472.40" r="1.4" fill="#505050"/><circle cx="610.55" cy="472.40" r="1.4" fill="#505050"/><circle cx="620.45" cy="472.40" r="1.4" fill="#505050"/><circle cx="630.35" cy="472.40" r="1.4" fill="#505050"/><circle cx="640.25" cy="472.40" r="1.4" fill="#505050"/><circle cx="501.65" cy="496.40" r="1.4" fill="#505050"/><circle cx="511.55" cy="496.40" r="1.4" fill="#505050"/><circle cx="521.45" cy="496.40" r="1.4" fill="#505050"/><circle cx="531.35" cy="496.40" r="1.4" fill="#505050"/><circle cx="541.25" cy="496.40" r="1.4" fill="#505050"/><circle cx="551.15" cy="496.40" r="1.4" fill="#505050"/><circle cx="561.05" cy="496.40" r="1.4" fill="#505050"/><circle cx="570.95" cy="496.40" r="1.4" fill="#505050"/><circle cx="580.85" cy="496.40" r="1.4" fill="#505050"/><circle cx="590.75" cy="496.40" r="1.4" fill="#505050"/><circle cx="600.65" cy="496.40" r="1.4" fill="#505050"/><circle cx="610.55" cy="496.40" r="1.4" fill="#505050"/><circle cx="620.45" cy="496.40" r="1.4" fill="#505050"/><circle cx="630.35" cy="496.40" r="1.4" fill="#505050"/><circle cx="640.25" cy="496.40" r="1.4" fill="#505050"/><circle cx="501.65" cy="520.40" r="1.4" fill="#505050"/><circle cx="511.55" cy="520.40" r="1.4" fill="#505050"/><circle cx="521.45" cy="520.40" r="1.4" fill="#505050"/><circle cx="531.35" cy="520.40" r="1.4" fill="#505050"/><circle cx="541.25" cy="520.40" r="1.4" fill="#505050"/><circle cx="551.15" cy="520.40" r="1.4" fill="#505050"/><circle cx="561.05" cy="520.40" r="1.4" fill="#505050"/><circle cx="570.95" cy="520.40" r="1.4" fill="#505050"/><circle cx="580.85" cy="520.40" r="1.4" fill="#505050"/><circle cx="590.75" cy="520.40" r="1.4" fill="#505050"/><circle cx="600.65" cy="520.40" r="1.4" fill="#505050"/><circle cx="610.55" cy="520.40" r="1.4" fill="#505050"/><circle cx="620.45" cy="520.40" r="1.4" fill="#505050"/><circle cx="630.35" cy="520.40" r="1.4" fill="#505050"/><circle cx="640.25" cy="520.40" r="1.4" fill="#505050"/><circle cx="501.65" cy="544.40" r="1.4" fill="#505050"/><circle cx="511.55" cy="544.40" r="1.4" fill="#505050"/><circle cx="521.45" cy="544.40" r="1.4" fill="#505050"/><circle cx="531.35" cy="544.40" r="1.4" fill="#505050"/><circle cx="541.25" cy="544.40" r="1.4" fill="#505050"/><circle cx="551.15" cy="544.40" r="1.4" fill="#505050"/><circle cx="561.05" cy="544.40" r="1.4" fill="#505050"/><circle cx="570.95" cy="544.40" r="1.4" fill="#505050"/><circle cx="580.85" cy="544.40" r="1.4" fill="#505050"/><circle cx="590.75" cy="544.40" r="1.4" fill="#505050"/><circle cx="600.65" cy="544.40" r="1.4" fill="#505050"/><circle cx="610.55" cy="544.40" r="1.4" fill="#505050"/><circle cx="620.45" cy="544.40" r="1.4" fill="#505050"/><circle cx="630.35" cy="544.40" r="1.4" fill="#505050"/><circle cx="640.25" cy="544.40" r="1.4" fill="#505050"/><circle cx="501.65" cy="568.40" r="1.4" fill="#505050"/><circle cx="511.55" cy="568.40" r="1.4" fill="#505050"/><circle cx="521.45" cy="568.40" r="1.4" fill="#505050"/><circle cx="531.35" cy="568.40" r="1.4" fill="#505050"/><circle cx="541.25" cy="568.40" r="1.4" fill="#505050"/><circle cx="551.15" cy="568.40" r="1.4" fill="#505050"/><circle cx="561.05" cy="568.40" r="1.4" fill="#505050"/><circle cx="570.95" cy="568.40" r="1.4" fill="#505050"/><circle cx="580.85" cy="568.40" r="1.4" fill="#505050"/><circle cx="590.75" cy="568.40" r="1.4" fill="#505050"/><circle cx="600.65" cy="568.40" r="1.4" fill="#505050"/><circle cx="610.55" cy="568.40" r="1.4" fill="#505050"/><circle cx="620.45" cy="568.40" r="1.4" fill="#505050"/><circle cx="630.35" cy="568.40" r="1.4" fill="#505050"/><circle cx="640.25" cy="568.40" r="1.4" fill="#505050"/><circle cx="907.55" cy="520.40" r="1.4" fill="#505050"/><circle cx="917.45" cy="520.40" r="1.4" fill="#505050"/><circle cx="937.25" cy="520.40" r="1.4" fill="#505050"/><circle cx="966.95" cy="520.40" r="1.4" fill="#505050"/></svg>
<div style="position:absolute;left:435.90px;top:113.61px;line-height:0;white-space:pre;font-family:'Liberation Mono', monospace;font-size:16.5px;color:#858585;font-weight:400;">110</div>
<div style="position:absolute;left:644.70px;top:113.61px;line-height:0;white-space:pre;font-family:'Liberation Mono', monospace;font-size:16.5px;color:#cccccc;font-weight:400;"><span style="color:#ce9178"><span style="position:relative;top:-1.8px">"</span>-DWITH_PNG=OFF<span style="position:relative;top:-1.8px">"</span></span><span style="color:#d4d4d4;font-weight:700;position:relative;left:0.8px">,</span></div>
<div style="position:absolute;left:435.90px;top:137.61px;line-height:0;white-space:pre;font-family:'Liberation Mono', monospace;font-size:16.5px;color:#858585;font-weight:400;">111</div>
<div style="position:absolute;left:644.70px;top:137.61px;line-height:0;white-space:pre;font-family:'Liberation Mono', monospace;font-size:16.5px;color:#cccccc;font-weight:400;"><span style="color:#ce9178"><span style="position:relative;top:-1.8px">"</span>-DWITH_TBB=OFF<span style="position:relative;top:-1.8px">"</span></span><span style="color:#d4d4d4;font-weight:700;position:relative;left:0.8px">,</span></div>
<div style="position:absolute;left:435.90px;top:161.61px;line-height:0;white-space:pre;font-family:'Liberation Mono', monospace;font-size:16.5px;color:#858585;font-weight:400;">112</div>
<div style="position:absolute;left:644.70px;top:161.61px;line-height:0;white-space:pre;font-family:'Liberation Mono', monospace;font-size:16.5px;color:#cccccc;font-weight:400;"><span style="color:#ce9178"><span style="position:relative;top:-1.8px">"</span>-DWITH_TIFF=OFF<span style="position:relative;top:-1.8px">"</span></span><span style="color:#d4d4d4;font-weight:700;position:relative;left:0.8px">,</span></div>
<div style="position:absolute;left:435.90px;top:185.61px;line-height:0;white-space:pre;font-family:'Liberation Mono', monospace;font-size:16.5px;color:#858585;font-weight:400;">113</div>
<div style="position:absolute;left:644.70px;top:185.61px;line-height:0;white-space:pre;font-family:'Liberation Mono', monospace;font-size:16.5px;color:#cccccc;font-weight:400;"><span style="color:#ce9178"><span style="position:relative;top:-1.8px">"</span>-DWITH_V4L=OFF<span style="position:relative;top:-1.8px">"</span></span><span style="color:#d4d4d4;font-weight:700;position:relative;left:0.8px">,</span></div>
<div style="position:absolute;left:435.90px;top:209.61px;line-height:0;white-space:pre;font-family:'Liberation Mono', monospace;font-size:16.5px;color:#858585;font-weight:400;">114</div>
<div style="position:absolute;left:644.70px;top:209.61px;line-height:0;white-space:pre;font-family:'Liberation Mono', monospace;font-size:16.5px;color:#cccccc;font-weight:400;"><span style="color:#ce9178"><span style="position:relative;top:-1.8px">"</span>-DWITH_OPENCL=OFF<span style="position:relative;top:-1.8px">"</span></span><span style="color:#d4d4d4;font-weight:700;position:relative;left:0.8px">,</span></div>
<div style="position:absolute;left:435.90px;top:233.61px;line-height:0;white-space:pre;font-family:'Liberation Mono', monospace;font-size:16.5px;color:#858585;font-weight:400;">115</div>
<div style="position:absolute;left:644.70px;top:233.61px;line-height:0;white-space:pre;font-family:'Liberation Mono', monospace;font-size:16.5px;color:#cccccc;font-weight:400;"><span style="color:#ce9178"><span style="position:relative;top:-1.8px">"</span>-DWITH_OPENCL_SVM=OFF<span style="position:relative;top:-1.8px">"</span></span><span style="color:#d4d4d4;font-weight:700;position:relative;left:0.8px">,</span></div>
<div style="position:absolute;left:435.90px;top:257.61px;line-height:0;white-space:pre;font-family:'Liberation Mono', monospace;font-size:16.5px;color:#858585;font-weight:400;">116</div>
<div style="position:absolute;left:644.70px;top:257.61px;line-height:0;white-space:pre;font-family:'Liberation Mono', monospace;font-size:16.5px;color:#cccccc;font-weight:400;"><span style="color:#ce9178"><span style="position:relative;top:-1.8px">"</span>-DWITH_OPENCLAMDFFT=OFF<span style="position:relative;top:-1.8px">"</span></span><span style="color:#d4d4d4;font-weight:700;position:relative;left:0.8px">,</span></div>
<div style="position:absolute;left:435.90px;top:281.61px;line-height:0;white-space:pre;font-family:'Liberation Mono', monospace;font-size:16.5px;color:#858585;font-weight:400;">117</div>
<div style="position:absolute;left:644.70px;top:281.61px;line-height:0;white-space:pre;font-family:'Liberation Mono', monospace;font-size:16.5px;color:#cccccc;font-weight:400;"><span style="color:#ce9178"><span style="position:relative;top:-1.8px">"</span>-DWITH_OPENCLAMDBLAS=OFF<span style="position:relative;top:-1.8px">"</span></span><span style="color:#d4d4d4;font-weight:700;position:relative;left:0.8px">,</span></div>
<div style="position:absolute;left:435.90px;top:305.61px;line-height:0;white-space:pre;font-family:'Liberation Mono', monospace;font-size:16.5px;color:#858585;font-weight:400;">118</div>
<div style="position:absolute;left:644.70px;top:305.61px;line-height:0;white-space:pre;font-family:'Liberation Mono', monospace;font-size:16.5px;color:#cccccc;font-weight:400;"><span style="color:#ce9178"><span style="position:relative;top:-1.8px">"</span>-DWITH_GPHOTO2=OFF<span style="position:relative;top:-1.8px">"</span></span><span style="color:#d4d4d4;font-weight:700;position:relative;left:0.8px">,</span></div>
<div style="position:absolute;left:435.90px;top:329.61px;line-height:0;white-space:pre;font-family:'Liberation Mono', monospace;font-size:16.5px;color:#858585;font-weight:400;">119</div>
<div style="position:absolute;left:644.70px;top:329.61px;line-height:0;white-space:pre;font-family:'Liberation Mono', monospace;font-size:16.5px;color:#cccccc;font-weight:400;"><span style="color:#ce9178"><span style="position:relative;top:-1.8px">"</span>-DWITH_LAPACK=OFF<span style="position:relative;top:-1.8px">"</span></span><span style="color:#d4d4d4;font-weight:700;position:relative;left:0.8px">,</span></div>
<div style="position:absolute;left:435.90px;top:353.61px;line-height:0;white-space:pre;font-family:'Liberation Mono', monospace;font-size:16.5px;color:#858585;font-weight:400;">120</div>
<div style="position:absolute;left:644.70px;top:353.61px;line-height:0;white-space:pre;font-family:'Liberation Mono', monospace;font-size:16.5px;color:#cccccc;font-weight:400;"><span style="color:#ce9178"><span style="position:relative;top:-1.8px">"</span>-DWITH_ITT=OFF<span style="position:relative;top:-1.8px">"</span></span><span style="color:#d4d4d4;font-weight:700;position:relative;left:0.8px">,</span></div>
<div style="position:absolute;left:435.90px;top:377.61px;line-height:0;white-space:pre;font-family:'Liberation Mono', monospace;font-size:16.5px;color:#858585;font-weight:400;">121</div>
<div style="position:absolute;left:644.70px;top:377.61px;line-height:0;white-space:pre;font-family:'Liberation Mono', monospace;font-size:16.5px;color:#cccccc;font-weight:400;"><span style="color:#ce9178"><span style="position:relative;top:-1.8px">"</span>-DWITH_QUIRC=ON<span style="position:relative;top:-1.8px">"</span></span><span style="color:#d4d4d4;font-weight:700;position:relative;left:0.8px">,</span></div>
<div style="position:absolute;left:435.90px;top:401.61px;line-height:0;white-space:pre;font-family:'Liberation Mono', monospace;font-size:16.5px;color:#858585;font-weight:400;">122</div>
<div style="position:absolute;left:644.70px;top:401.61px;line-height:0;white-space:pre;font-family:'Liberation Mono', monospace;font-size:16.5px;color:#cccccc;font-weight:400;"><span style="color:#ce9178"><span style="position:relative;top:-1.8px">"</span>-DBUILD_ZLIB=ON<span style="position:relative;top:-1.8px">"</span></span><span style="color:#d4d4d4;font-weight:700;position:relative;left:0.8px">,</span></div>
<div style="position:absolute;left:435.90px;top:425.61px;line-height:0;white-space:pre;font-family:'Liberation Mono', monospace;font-size:16.5px;color:#858585;font-weight:400;">123</div>
<div style="position:absolute;left:644.70px;top:425.61px;line-height:0;white-space:pre;font-family:'Liberation Mono', monospace;font-size:16.5px;color:#cccccc;font-weight:400;"><span style="color:#ce9178"><span style="position:relative;top:-1.8px">"</span>-DBUILD_opencv_apps=OFF<span style="position:relative;top:-1.8px">"</span></span><span style="color:#d4d4d4;font-weight:700;position:relative;left:0.8px">,</span></div>
<div style="position:absolute;left:435.90px;top:449.61px;line-height:0;white-space:pre;font-family:'Liberation Mono', monospace;font-size:16.5px;color:#858585;font-weight:400;">124</div>
<div style="position:absolute;left:644.70px;top:449.61px;line-height:0;white-space:pre;font-family:'Liberation Mono', monospace;font-size:16.5px;color:#cccccc;font-weight:400;"><span style="color:#ce9178"><span style="position:relative;top:-1.8px">"</span>-DBUILD_opencv_calib3d=ON<span style="position:relative;top:-1.8px">"</span></span><span style="color:#d4d4d4;font-weight:700;position:relative;left:0.8px">,</span></div>
<div style="position:absolute;left:435.90px;top:473.61px;line-height:0;white-space:pre;font-family:'Liberation Mono', monospace;font-size:16.5px;color:#c6c6c6;font-weight:400;">125</div>
<div style="position:absolute;left:644.70px;top:473.61px;line-height:0;white-space:pre;font-family:'Liberation Mono', monospace;font-size:16.5px;color:#cccccc;font-weight:400;"><span style="color:#ce9178"><span style="position:relative;top:-1.8px">"</span>-DBUILD_opencv_dnn=OFF<span style="position:relative;top:-1.8px">"</span></span><span style="color:#d4d4d4;font-weight:700;position:relative;left:0.8px">,</span></div>
<div style="position:absolute;left:435.90px;top:497.61px;line-height:0;white-space:pre;font-family:'Liberation Mono', monospace;font-size:16.5px;color:#858585;font-weight:400;">126</div>
<div style="position:absolute;left:644.70px;top:497.61px;line-height:0;white-space:pre;font-family:'Liberation Mono', monospace;font-size:16.5px;color:#cccccc;font-weight:400;"><span style="color:#ce9178"><span style="position:relative;top:-1.8px">"</span>-DBUILD_opencv_features2d=ON<span style="position:relative;top:-1.8px">"</span></span><span style="color:#d4d4d4;font-weight:700;position:relative;left:0.8px">,</span></div>
<div style="position:absolute;left:435.90px;top:521.61px;line-height:0;white-space:pre;font-family:'Liberation Mono', monospace;font-size:16.5px;color:#858585;font-weight:400;">127</div>
<div style="position:absolute;left:644.70px;top:521.61px;line-height:0;white-space:pre;font-family:'Liberation Mono', monospace;font-size:16.5px;color:#cccccc;font-weight:400;"><span style="color:#ce9178"><span style="position:relative;top:-1.8px">"</span>-DBUILD_opencv_flann=ON<span style="position:relative;top:-1.8px">"</span></span><span style="color:#d4d4d4;font-weight:700;position:relative;left:0.8px">,</span>  <span style="color:#6a9955"># No binding</span></div>
<div style="position:absolute;left:435.90px;top:545.61px;line-height:0;white-space:pre;font-family:'Liberation Mono', monospace;font-size:16.5px;color:#858585;font-weight:400;">128</div>
<div style="position:absolute;left:644.70px;top:545.61px;line-height:0;white-space:pre;font-family:'Liberation Mono', monospace;font-size:16.5px;color:#cccccc;font-weight:400;"><span style="color:#ce9178"><span style="position:relative;top:-1.8px">"</span>-DBUILD_opencv_gapi=OFF<span style="position:relative;top:-1.8px">"</span></span><span style="color:#d4d4d4;font-weight:700;position:relative;left:0.8px">,</span></div>
<div style="position:absolute;left:435.90px;top:569.61px;line-height:0;white-space:pre;font-family:'Liberation Mono', monospace;font-size:16.5px;color:#858585;font-weight:400;">129</div>
<div style="position:absolute;left:644.70px;top:569.61px;line-height:0;white-space:pre;font-family:'Liberation Mono', monospace;font-size:16.5px;color:#cccccc;font-weight:400;"><span style="color:#ce9178"><span style="position:relative;top:-1.8px">"</span>-DBUILD_opencv_ml=OFF<span style="position:relative;top:-1.8px">"</span></span><span style="color:#d4d4d4;font-weight:700;position:relative;left:0.8px">,</span></div>
<svg style="position:absolute;left:0px;top:0px;overflow:visible" width="1037" height="583" viewBox="0 0 1037 583"><clipPath id="sqc4_23"><rect x="723.90" y="215.70000000000002" width="59.40" height="6.3"/></clipPath><path d="M716.70,218.74 L718.50,220.00 L722.10,217.70 L723.90,218.74 L723.90,218.74 L725.70,220.00 L729.30,217.70 L731.10,218.74 L731.10,218.74 L732.90,220.00 L736.50,217.70 L738.30,218.74 L738.30,218.74 L740.10,220.00 L743.70,217.70 L745.50,218.74 L745.50,218.74 L747.30,220.00 L750.90,217.70 L752.70,218.74 L752.70,218.74 L754.50,220.00 L758.10,217.70 L759.90,218.74 L759.90,218.74 L761.70,220.00 L765.30,217.70 L767.10,218.74 L767.10,218.74 L768.90,220.00 L772.50,217.70 L774.30,218.74 L774.30,218.74 L776.10,220.00 L779.70,217.70 L781.50,218.74 L781.50,218.74 L783.30,220.00 L786.90,217.70 L788.70,218.74" fill="none" stroke="#4a93df" stroke-width="1.15" clip-path="url(#sqc4_23)"/><clipPath id="sqc5_23"><rect x="723.90" y="239.70000000000002" width="59.40" height="6.3"/></clipPath><path d="M716.70,242.74 L718.50,244.00 L722.10,241.70 L723.90,242.74 L723.90,242.74 L725.70,244.00 L729.30,241.70 L731.10,242.74 L731.10,242.74 L732.90,244.00 L736.50,241.70 L738.30,242.74 L738.30,242.74 L740.10,244.00 L743.70,241.70 L745.50,242.74 L745.50,242.74 L747.30,244.00 L750.90,241.70 L752.70,242.74 L752.70,242.74 L754.50,244.00 L758.10,241.70 L759.90,242.74 L759.90,242.74 L761.70,244.00 L765.30,241.70 L767.10,242.74 L767.10,242.74 L768.90,244.00 L772.50,241.70 L774.30,242.74 L774.30,242.74 L776.10,244.00 L779.70,241.70 L781.50,242.74 L781.50,242.74 L783.30,244.00 L786.90,241.70 L788.70,242.74" fill="none" stroke="#4a93df" stroke-width="1.15" clip-path="url(#sqc5_23)"/><clipPath id="sqc6_23"><rect x="723.90" y="263.7" width="118.80" height="6.3"/></clipPath><path d="M716.70,266.74 L718.50,268.00 L722.10,265.70 L723.90,266.74 L723.90,266.74 L725.70,268.00 L729.30,265.70 L731.10,266.74 L731.10,266.74 L732.90,268.00 L736.50,265.70 L738.30,266.74 L738.30,266.74 L740.10,268.00 L743.70,265.70 L745.50,266.74 L745.50,266.74 L747.30,268.00 L750.90,265.70 L752.70,266.74 L752.70,266.74 L754.50,268.00 L758.10,265.70 L759.90,266.74 L759.90,266.74 L761.70,268.00 L765.30,265.70 L767.10,266.74 L767.10,266.74 L768.90,268.00 L772.50,265.70 L774.30,266.74 L774.30,266.74 L776.10,268.00 L779.70,265.70 L781.50,266.74 L781.50,266.74 L783.30,268.00 L786.90,265.70 L788.70,266.74 L788.70,266.74 L790.50,268.00 L794.10,265.70 L795.90,266.74 L795.90,266.74 L797.70,268.00 L801.30,265.70 L803.10,266.74 L803.10,266.74 L804.90,268.00 L808.50,265.70 L810.30,266.74 L810.30,266.74 L812.10,268.00 L815.70,265.70 L817.50,266.74 L817.50,266.74 L819.30,268.00 L822.90,265.70 L824.70,266.74 L824.70,266.74 L826.50,268.00 L830.10,265.70 L831.90,266.74 L831.90,266.74 L833.70,268.00 L837.30,265.70 L839.10,266.74 L839.10,266.74 L840.90,268.00 L844.50,265.70 L846.30,266.74" fill="none" stroke="#4a93df" stroke-width="1.15" clip-path="url(#sqc6_23)"/><clipPath id="sqc7_23"><rect x="723.90" y="287.7" width="128.70" height="6.3"/></clipPath><path d="M716.70,290.74 L718.50,292.00 L722.10,289.70 L723.90,290.74 L723.90,290.74 L725.70,292.00 L729.30,289.70 L731.10,290.74 L731.10,290.74 L732.90,292.00 L736.50,289.70 L738.30,290.74 L738.30,290.74 L740.10,292.00 L743.70,289.70 L745.50,290.74 L745.50,290.74 L747.30,292.00 L750.90,289.70 L752.70,290.74 L752.70,290.74 L754.50,292.00 L758.10,289.70 L759.90,290.74 L759.90,290.74 L761.70,292.00 L765.30,289.70 L767.10,290.74 L767.10,290.74 L768.90,292.00 L772.50,289.70 L774.30,290.74 L774.30,290.74 L776.10,292.00 L779.70,289.70 L781.50,290.74 L781.50,290.74 L783.30,292.00 L786.90,289.70 L788.70,290.74 L788.70,290.74 L790.50,292.00 L794.10,289.70 L795.90,290.74 L795.90,290.74 L797.70,292.00 L801.30,289.70 L803.10,290.74 L803.10,290.74 L804.90,292.00 L808.50,289.70 L810.30,290.74 L810.30,290.74 L812.10,292.00 L815.70,289.70 L817.50,290.74 L817.50,290.74 L819.30,292.00 L822.90,289.70 L824.70,290.74 L824.70,290.74 L826.50,292.00 L830.10,289.70 L831.90,290.74 L831.90,290.74 L833.70,292.00 L837.30,289.70 L839.10,290.74 L839.10,290.74 L840.90,292.00 L844.50,289.70 L846.30,290.74 L846.30,290.74 L848.10,292.00 L851.70,289.70 L853.50,290.74" fill="none" stroke="#4a93df" stroke-width="1.15" clip-path="url(#sqc7_23)"/><clipPath id="sqc8_23"><rect x="723.90" y="311.7" width="59.40" height="6.3"/></clipPath><path d="M716.70,314.74 L718.50,316.00 L722.10,313.70 L723.90,314.74 L723.90,314.74 L725.70,316.00 L729.30,313.70 L731.10,314.74 L731.10,314.74 L732.90,316.00 L736.50,313.70 L738.30,314.74 L738.30,314.74 L740.10,316.00 L743.70,313.70 L745.50,314.74 L745.50,314.74 L747.30,316.00 L750.90,313.70 L752.70,314.74 L752.70,314.74 L754.50,316.00 L758.10,313.70 L759.90,314.74 L759.90,314.74 L761.70,316.00 L765.30,313.70 L767.10,314.74 L767.10,314.74 L768.90,316.00 L772.50,313.70 L774.30,314.74 L774.30,314.74 L776.10,316.00 L779.70,313.70 L781.50,314.74 L781.50,314.74 L783.30,316.00 L786.90,313.70 L788.70,314.74" fill="none" stroke="#4a93df" stroke-width="1.15" clip-path="url(#sqc8_23)"/><clipPath id="sqc9_23"><rect x="723.90" y="335.7" width="59.40" height="6.3"/></clipPath><path d="M716.70,338.74 L718.50,340.00 L722.10,337.70 L723.90,338.74 L723.90,338.74 L725.70,340.00 L729.30,337.70 L731.10,338.74 L731.10,338.74 L732.90,340.00 L736.50,337.70 L738.30,338.74 L738.30,338.74 L740.10,340.00 L743.70,337.70 L745.50,338.74 L745.50,338.74 L747.30,340.00 L750.90,337.70 L752.70,338.74 L752.70,338.74 L754.50,340.00 L758.10,337.70 L759.90,338.74 L759.90,338.74 L761.70,340.00 L765.30,337.70 L767.10,338.74 L767.10,338.74 L768.90,340.00 L772.50,337.70 L774.30,338.74 L774.30,338.74 L776.10,340.00 L779.70,337.70 L781.50,338.74 L781.50,338.74 L783.30,340.00 L786.90,337.70 L788.70,338.74" fill="none" stroke="#4a93df" stroke-width="1.15" clip-path="url(#sqc9_23)"/><clipPath id="sqc11_23"><rect x="723.90" y="383.7" width="49.50" height="6.3"/></clipPath><path d="M716.70,386.74 L718.50,388.00 L722.10,385.70 L723.90,386.74 L723.90,386.74 L725.70,388.00 L729.30,385.70 L731.10,386.74 L731.10,386.74 L732.90,388.00 L736.50,385.70 L738.30,386.74 L738.30,386.74 L740.10,388.00 L743.70,385.70 L745.50,386.74 L745.50,386.74 L747.30,388.00 L750.90,385.70 L752.70,386.74 L752.70,386.74 L754.50,388.00 L758.10,385.70 L759.90,386.74 L759.90,386.74 L761.70,388.00 L765.30,385.70 L767.10,386.74 L767.10,386.74 L768.90,388.00 L772.50,385.70 L774.30,386.74" fill="none" stroke="#4a93df" stroke-width="1.15" clip-path="url(#sqc11_23)"/><clipPath id="sqc12_17"><rect x="664.50" y="407.7" width="59.40" height="6.3"/></clipPath><path d="M657.30,410.74 L659.10,412.00 L662.70,409.70 L664.50,410.74 L664.50,410.74 L666.30,412.00 L669.90,409.70 L671.70,410.74 L671.70,410.74 L673.50,412.00 L677.10,409.70 L678.90,410.74 L678.90,410.74 L680.70,412.00 L684.30,409.70 L686.10,410.74 L686.10,410.74 L687.90,412.00 L691.50,409.70 L693.30,410.74 L693.30,410.74 L695.10,412.00 L698.70,409.70 L700.50,410.74 L700.50,410.74 L702.30,412.00 L705.90,409.70 L707.70,410.74 L707.70,410.74 L709.50,412.00 L713.10,409.70 L714.90,410.74 L714.90,410.74 L716.70,412.00 L720.30,409.70 L722.10,410.74 L722.10,410.74 L723.90,412.00 L727.50,409.70 L729.30,410.74" fill="none" stroke="#4a93df" stroke-width="1.15" clip-path="url(#sqc12_17)"/><clipPath id="sqc13_17"><rect x="664.50" y="431.7" width="59.40" height="6.3"/></clipPath><path d="M657.30,434.74 L659.10,436.00 L662.70,433.70 L664.50,434.74 L664.50,434.74 L666.30,436.00 L669.90,433.70 L671.70,434.74 L671.70,434.74 L673.50,436.00 L677.10,433.70 L678.90,434.74 L678.90,434.74 L680.70,436.00 L684.30,433.70 L686.10,434.74 L686.10,434.74 L687.90,436.00 L691.50,433.70 L693.30,434.74 L693.30,434.74 L695.10,436.00 L698.70,433.70 L700.50,434.74 L700.50,434.74 L702.30,436.00 L705.90,433.70 L707.70,434.74 L707.70,434.74 L709.50,436.00 L713.10,433.70 L714.90,434.74 L714.90,434.74 L716.70,436.00 L720.30,433.70 L722.10,434.74 L722.10,434.74 L723.90,436.00 L727.50,433.70 L729.30,434.74" fill="none" stroke="#4a93df" stroke-width="1.15" clip-path="url(#sqc13_17)"/><clipPath id="sqc13_24"><rect x="733.80" y="431.7" width="59.40" height="6.3"/></clipPath><path d="M726.60,434.74 L728.40,436.00 L732.00,433.70 L733.80,434.74 L733.80,434.74 L735.60,436.00 L739.20,433.70 L741.00,434.74 L741.00,434.74 L742.80,436.00 L746.40,433.70 L748.20,434.74 L748.20,434.74 L750.00,436.00 L753.60,433.70 L755.40,434.74 L755.40,434.74 L757.20,436.00 L760.80,433.70 L762.60,434.74 L762.60,434.74 L764.40,436.00 L768.00,433.70 L769.80,434.74 L769.80,434.74 L771.60,436.00 L775.20,433.70 L777.00,434.74 L777.00,434.74 L778.80,436.00 L782.40,433.70 L784.20,434.74 L784.20,434.74 L786.00,436.00 L789.60,433.70 L791.40,434.74 L791.40,434.74 L793.20,436.00 L796.80,433.70 L798.60,434.74" fill="none" stroke="#4a93df" stroke-width="1.15" clip-path="url(#sqc13_24)"/><clipPath id="sqc14_17"><rect x="664.50" y="455.7" width="59.40" height="6.3"/></clipPath><path d="M657.30,458.74 L659.10,460.00 L662.70,457.70 L664.50,458.74 L664.50,458.74 L666.30,460.00 L669.90,457.70 L671.70,458.74 L671.70,458.74 L673.50,460.00 L677.10,457.70 L678.90,458.74 L678.90,458.74 L680.70,460.00 L684.30,457.70 L686.10,458.74 L686.10,458.74 L687.90,460.00 L691.50,457.70 L693.30,458.74 L693.30,458.74 L695.10,460.00 L698.70,457.70 L700.50,458.74 L700.50,458.74 L702.30,460.00 L705.90,457.70 L707.70,458.74 L707.70,458.74 L709.50,460.00 L713.10,457.70 L714.90,458.74 L714.90,458.74 L716.70,460.00 L720.30,457.70 L722.10,458.74 L722.10,458.74 L723.90,460.00 L727.50,457.70 L729.30,458.74" fill="none" stroke="#4a93df" stroke-width="1.15" clip-path="url(#sqc14_17)"/><clipPath id="sqc14_24"><rect x="733.80" y="455.7" width="59.40" height="6.3"/></clipPath><path d="M726.60,458.74 L728.40,460.00 L732.00,457.70 L733.80,458.74 L733.80,458.74 L735.60,460.00 L739.20,457.70 L741.00,458.74 L741.00,458.74 L742.80,460.00 L746.40,457.70 L748.20,458.74 L748.20,458.74 L750.00,460.00 L753.60,457.70 L755.40,458.74 L755.40,458.74 L757.20,460.00 L760.80,457.70 L762.60,458.74 L762.60,458.74 L764.40,460.00 L768.00,457.70 L769.80,458.74 L769.80,458.74 L771.60,460.00 L775.20,457.70 L777.00,458.74 L777.00,458.74 L778.80,460.00 L782.40,457.70 L784.20,458.74 L784.20,458.74 L786.00,460.00 L789.60,457.70 L791.40,458.74 L791.40,458.74 L793.20,460.00 L796.80,457.70 L798.60,458.74" fill="none" stroke="#4a93df" stroke-width="1.15" clip-path="url(#sqc14_24)"/><clipPath id="sqc15_17"><rect x="664.50" y="479.7" width="59.40" height="6.3"/></clipPath><path d="M657.30,482.74 L659.10,484.00 L662.70,481.70 L664.50,482.74 L664.50,482.74 L666.30,484.00 L669.90,481.70 L671.70,482.74 L671.70,482.74 L673.50,484.00 L677.10,481.70 L678.90,482.74 L678.90,482.74 L680.70,484.00 L684.30,481.70 L686.10,482.74 L686.10,482.74 L687.90,484.00 L691.50,481.70 L693.30,482.74 L693.30,482.74 L695.10,484.00 L698.70,481.70 L700.50,482.74 L700.50,482.74 L702.30,484.00 L705.90,481.70 L707.70,482.74 L707.70,482.74 L709.50,484.00 L713.10,481.70 L714.90,482.74 L714.90,482.74 L716.70,484.00 L720.30,481.70 L722.10,482.74 L722.10,482.74 L723.90,484.00 L727.50,481.70 L729.30,482.74" fill="none" stroke="#4a93df" stroke-width="1.15" clip-path="url(#sqc15_17)"/><clipPath id="sqc17_31"><rect x="803.10" y="527.6999999999999" width="49.50" height="6.3"/></clipPath><path d="M795.90,530.73 L797.70,532.00 L801.30,529.70 L803.10,530.73 L803.10,530.73 L804.90,532.00 L808.50,529.70 L810.30,530.73 L810.30,530.73 L812.10,532.00 L815.70,529.70 L817.50,530.73 L817.50,530.73 L819.30,532.00 L822.90,529.70 L824.70,530.73 L824.70,530.73 L826.50,532.00 L830.10,529.70 L831.90,530.73 L831.90,530.73 L833.70,532.00 L837.30,529.70 L839.10,530.73 L839.10,530.73 L840.90,532.00 L844.50,529.70 L846.30,530.73 L846.30,530.73 L848.10,532.00 L851.70,529.70 L853.50,530.73" fill="none" stroke="#4a93df" stroke-width="1.15" clip-path="url(#sqc17_31)"/><clipPath id="sqc18_31"><rect x="803.10" y="551.6999999999999" width="39.60" height="6.3"/></clipPath><path d="M795.90,554.73 L797.70,556.00 L801.30,553.70 L803.10,554.73 L803.10,554.73 L804.90,556.00 L808.50,553.70 L810.30,554.73 L810.30,554.73 L812.10,556.00 L815.70,553.70 L817.50,554.73 L817.50,554.73 L819.30,556.00 L822.90,553.70 L824.70,554.73 L824.70,554.73 L826.50,556.00 L830.10,553.70 L831.90,554.73 L831.90,554.73 L833.70,556.00 L837.30,553.70 L839.10,554.73 L839.10,554.73 L840.90,556.00 L844.50,553.70 L846.30,554.73" fill="none" stroke="#4a93df" stroke-width="1.15" clip-path="url(#sqc18_31)"/></svg>
<div style="position:absolute;left:472px;top:459px;width:3px;height:25px;background:#1b81a8;"></div>
<div style="position:absolute;left:892.5px;top:461px;width:2px;height:24px;background:#aeafad;"></div>
<div style="position:absolute;left:957.20px;top:473.61px;line-height:0;white-space:pre;font-family:'Liberation Mono', monospace;font-size:16.5px;color:#4f4f4f;font-weight:400;">You, seconds ago</div>
<div style="position:absolute;left:634.7px;top:456px;width:256.5px;height:27.2px;border:3.5px solid #f03e3e"></div>
<div style="position:absolute;left:412px;top:101px;width:625px;height:6px;background:linear-gradient(rgba(0,0,0,0.55), rgba(0,0,0,0));"></div>
</body></html>
